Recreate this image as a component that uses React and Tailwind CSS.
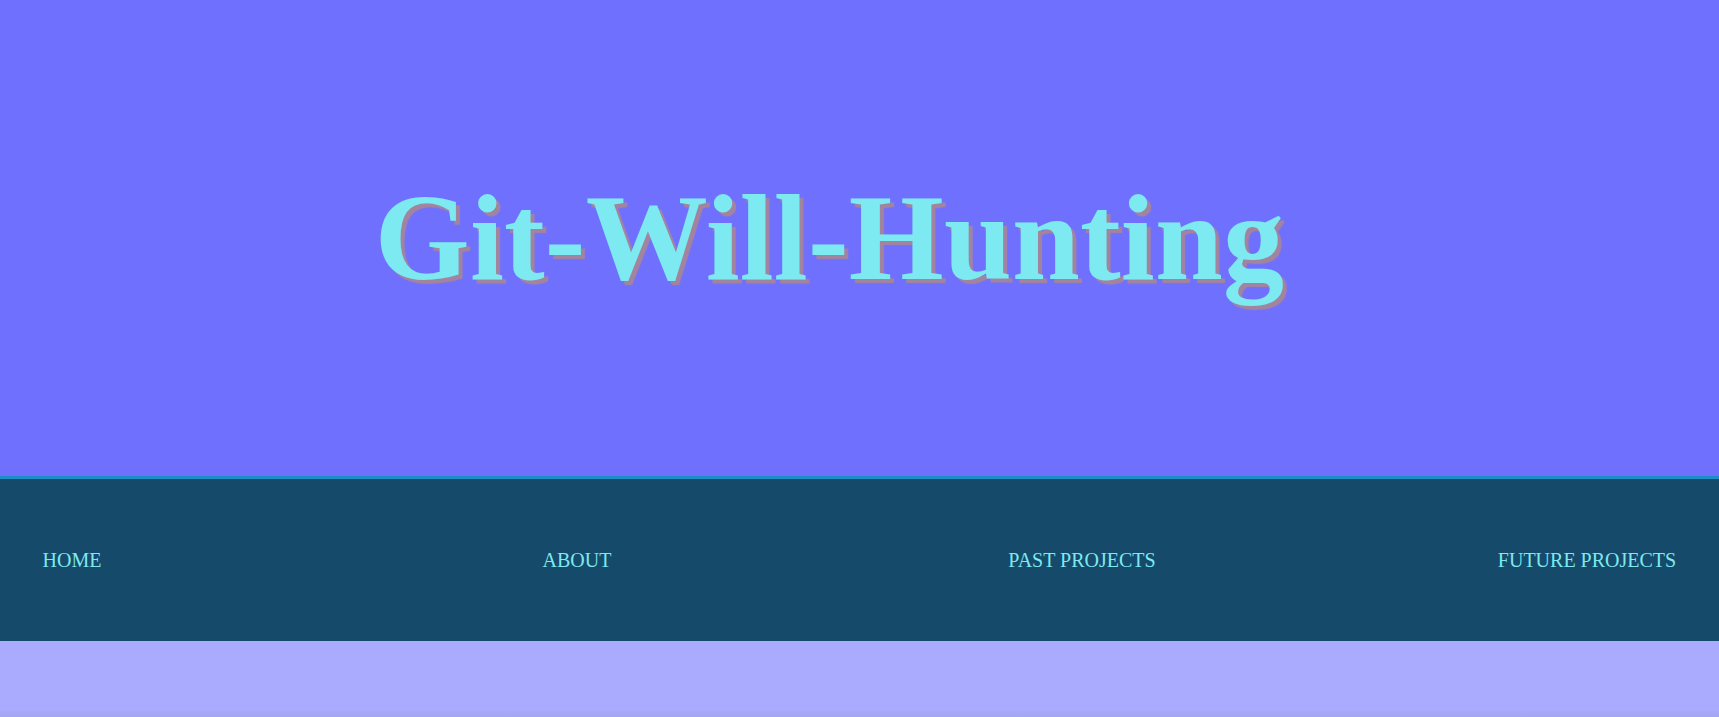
const links = ["HOME", "ABOUT", "PAST PROJECTS", "FUTURE PROJECTS"];

export default function App() {
  return (
    <div className="min-h-screen bg-[#aaaaff] font-['Liberation_Serif','Times_New_Roman',serif]">
      <header className="h-[476px] bg-[#7070ff] flex items-center justify-center pr-[60px]">
        <h1 className="text-[122px] font-bold leading-none tracking-[0.2px] text-[#7de9f0] [text-shadow:4px_4px_1px_#a3849f] pb-[1px]">
          Git-Will-Hunting
        </h1>
      </header>

      <nav className="h-[165px] bg-[#164a6a] border-t-[3px] border-[#1e8fc6]">
        <ul className="h-full flex items-center justify-between pr-[60px]">
          {links.map((link) => (
            <li key={link} className="w-[144px] flex justify-center whitespace-nowrap">
              <a href="#" className="text-[20px] text-[#7de9f0]">
                {link}
              </a>
            </li>
          ))}
        </ul>
      </nav>

      <div className="h-[76px] flex flex-col justify-end">
        <div className="h-[8px] bg-gradient-to-b from-[#aaaaff] to-[#a5a5f2]" />
      </div>
    </div>
  );
}
